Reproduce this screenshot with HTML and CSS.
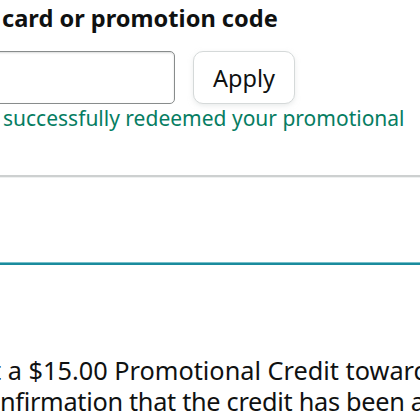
FILE: index.html
```html
<!DOCTYPE html>
<html>
<head>
<meta charset="utf-8">
<link rel="stylesheet" href="styles.css">
</head>
<body>
<div class="page">
  <section class="promo">
    <h2 class="promo-title">card or promotion code</h2>
    <div class="promo-row">
      <div class="promo-input"></div>
      <button class="apply-btn">Apply</button>
    </div>
    <p class="success">successfully redeemed your promotional</p>
  </section>
  <hr class="divider">
  <div class="spacer"></div>
  <hr class="accent">
  <section class="details">
    <p class="details-text"><span class="line line1">t a $15.00 Promotional Credit toward</span><span class="line line2">nfirmation that the credit has been a</span></p>
  </section>
</div>
</body>
</html>
```

FILE: styles.css
```css
* { box-sizing: border-box; }
html, body { margin: 0; padding: 0; background: #fff; }
body {
  width: 420px;
  height: 420px;
  overflow: hidden;
  font-family: "Noto Sans", "Open Sans", sans-serif;
  color: #0f1111;
}
.page { width: 420px; }
.promo { padding: 0 0 0 3px; }
.promo-title {
  margin: 0 0 0 -1px;
  padding-top: 3px;
  font-size: 23.6px;
  line-height: 30px;
  font-weight: 700;
  color: #0f1111;
  white-space: nowrap;
}
.promo-row {
  display: flex;
  align-items: stretch;
  gap: 18px;
  margin-top: 18px;
  margin-left: -13px;
  height: 53px;
}
.promo-input {
  width: 185px;
  border: 1px solid #888c8c;
  border-radius: 5px;
  box-shadow: inset 0 1px 2px rgba(15,17,17,.15);
}
.apply-btn {
  width: 102px;
  background: #fff;
  border: 1px solid #d5d9d9;
  border-radius: 10px;
  box-shadow: 0 2px 5px rgba(213,217,217,.5);
  font-family: inherit;
  font-size: 23.5px;
  color: #0f1111;
  padding: 0;
}
.success {
  margin: 1px 0 0;
  font-size: 21px;
  line-height: 26px;
  color: #067d62;
  white-space: nowrap;
}
.divider {
  margin: 44px 0 0;
  border: 0;
  border-top: 2px solid #cdd0d0;
  border-bottom: 1px solid #eef0f0;
  height: 0;
}
.spacer { height: 84px; }
.accent {
  margin: 0;
  border: 0;
  height: 3px;
  background: #1a8b9d;
  border-top: 1px solid #78bfca;
}
.details { padding-top: 90px; }
.details-text {
  margin: 0;
  font-size: 25.3px;
  line-height: 31px;
  white-space: nowrap;
}
.line { display: block; }
.line1 { margin-left: -8px; }
.line2 { margin-left: 0; letter-spacing: -0.3px; }
```
